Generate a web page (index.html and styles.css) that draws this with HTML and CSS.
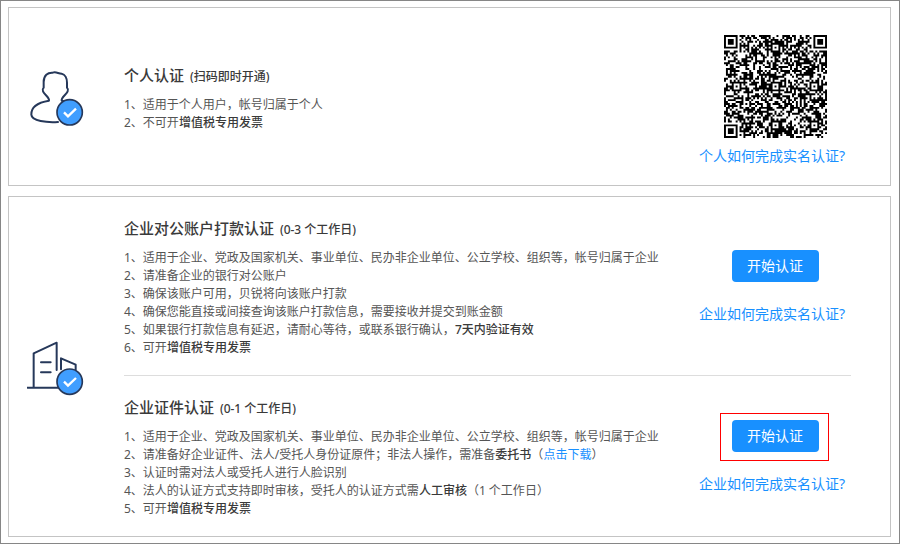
FILE: index.html
```html
<!DOCTYPE html>
<html lang="zh-CN">
<head>
<meta charset="utf-8">
<meta name="viewport" content="width=device-width, initial-scale=1">
<title>实名认证</title>
<link rel="stylesheet" href="styles.css">
</head>
<body>
<main class="page">
  <section class="card">
    <div class="card-icon">
      <svg class="icon" viewBox="20 30 174 171" aria-hidden="true">
        <path class="line" d="M113 186C80 188 34 184 33 164C32 139 55 127 86 122C88 112 72 104 68 94C65 88 70 83 70 83V66C70 46 82 37 97 38C107 34 114 41 124 41C134 43 140 55 140 68V83C140 83 145 88 142 94C138 104 122 112 124 122L138 125"/>
        <circle class="badge" cx="148" cy="157" r="38"/>
        <path class="tick" d="M131 157L143 169L167 146"/>
      </svg>
    </div>
    <div class="rows">
      <article class="row">
        <div class="info">
          <h2 class="title">个人认证 <small>(扫码即时开通)</small></h2>
          <ul class="list">
            <li>1、适用于个人用户，帐号归属于个人</li>
            <li>2、不可开<b>增值税专用发票</b></li>
          </ul>
        </div>
        <div class="action action-code">
          <svg class="qr" id="qr" viewBox="0 0 53 53" role="img" aria-label="二维码"></svg>
          <a class="help" href="#personal">个人如何完成实名认证?</a>
        </div>
      </article>
    </div>
  </section>

  <section class="card">
    <div class="card-icon">
      <svg class="icon" viewBox="20 30 174 171" aria-hidden="true">
        <path class="line" d="M22 173H118M40 173V70L109 38V120M122 118V85L166 104V120M62 97H91M62 127H91"/>
        <circle class="badge" cx="148" cy="155" r="38"/>
        <path class="tick" d="M131 155L143 167L167 144"/>
      </svg>
    </div>
    <div class="rows">
      <article class="row">
        <div class="info">
          <h2 class="title">企业对公账户打款认证 <small>(0-3 个工作日)</small></h2>
          <ul class="list">
            <li>1、适用于企业、党政及国家机关、事业单位、民办非企业单位、公立学校、组织等，帐号归属于企业</li>
            <li>2、请准备企业的银行对公账户</li>
            <li>3、确保该账户可用，贝锐将向该账户打款</li>
            <li>4、确保您能直接或间接查询该账户打款信息，需要接收并提交到账金额</li>
            <li>5、如果银行打款信息有延迟，请耐心等待，或联系银行确认，<b>7天内验证有效</b></li>
            <li>6、可开<b>增值税专用发票</b></li>
          </ul>
        </div>
        <div class="action action-start">
          <button class="btn" type="button">开始认证</button>
          <a class="help" href="#account">企业如何完成实名认证?</a>
        </div>
      </article>
      <article class="row">
        <div class="info">
          <h2 class="title">企业证件认证 <small>(0-1 个工作日)</small></h2>
          <ul class="list">
            <li>1、适用于企业、党政及国家机关、事业单位、民办非企业单位、公立学校、组织等，帐号归属于企业</li>
            <li>2、请准备好企业证件、法人/受托人身份证原件；非法人操作，需准备<b>委托书</b>（<a class="download" href="#download">点击下载</a>）</li>
            <li>3、认证时需对法人或受托人进行人脸识别</li>
            <li>4、法人的认证方式支持即时审核，受托人的认证方式需<b>人工审核</b>（1 个工作日）</li>
            <li>5、可开<b>增值税专用发票</b></li>
          </ul>
        </div>
        <div class="action action-start">
          <button class="btn btn-marked" type="button">开始认证</button>
          <a class="help" href="#certificate">企业如何完成实名认证?</a>
        </div>
      </article>
    </div>
  </section>
</main>
<script src="qr.js"></script>
</body>
</html>
```
FILE: styles.css
```css
* {
  box-sizing: border-box;
}

body {
  margin: 0;
  background: #fff;
  color: #555;
  font: 12px/18px "Noto Sans", "Noto Sans CJK SC", sans-serif;
}

.page {
  display: flex;
  flex-direction: column;
  gap: 10px;
  min-height: 100vh;
  padding: 6px 8px 6px 7px;
  border: 1px solid #868686;
}

.card {
  display: flex;
  align-items: center;
  border: 1px solid #c4c4c4;
}

.card-icon {
  flex: none;
  width: 115px;
  padding: 3px 0 0 18px;
}

.icon {
  display: block;
  width: 58px;
  height: 57px;
}

.line {
  fill: none;
  stroke: #26385a;
  stroke-width: 6;
  stroke-linecap: round;
  stroke-linejoin: round;
}

.badge {
  fill: #409eff;
  stroke: #26385a;
  stroke-width: 5;
}

.tick {
  fill: none;
  stroke: #fff;
  stroke-width: 7;
}

.rows {
  flex: 1;
  min-width: 0;
  margin-right: 39px;
}

.row {
  display: flex;
  align-items: center;
  padding: 20px 0 18px;
}

.row + .row {
  border-top: 1px solid #ddd;
}

.info {
  flex: 1;
  min-width: 0;
}

.title {
  margin: 0 0 10px;
  color: #3a3a3a;
  font-size: 15px;
  font-weight: 500;
  line-height: 22px;
}

.title small {
  margin-left: 2px;
  font-size: 12px;
  line-height: 12px;
}

.list {
  margin: 0;
  padding: 0;
  list-style: none;
}

.list b {
  color: #3a3a3a;
  font-weight: 500;
}

.action {
  display: flex;
  flex: none;
  flex-direction: column;
  align-items: center;
  width: 152px;
}

.action-code {
  gap: 7px;
  padding-top: 7px;
}

.action-start {
  gap: 21px;
}

.qr {
  display: block;
  width: 103px;
  height: 103px;
}

.help {
  align-self: flex-start;
  color: #1890ff;
  font-size: 14px;
  line-height: 22px;
  text-decoration: none;
}

.download {
  color: #1890ff;
  text-decoration: none;
}

.btn {
  position: relative;
  width: 87px;
  height: 32px;
  padding: 0;
  border: 0;
  border-radius: 4px;
  background: #1890ff;
  color: #fff;
  font: inherit;
  font-size: 14px;
}

.btn-marked::after {
  content: "";
  position: absolute;
  inset: -7px -10px -9px -12px;
  border: 1px solid #f00;
}
```
FILE: qr.js
```js
// Draws a 53-module code: finders, alignment marks, timing lines and data.
(function () {
  var size = 53;
  var seed = 20231;
  function random() {
    seed = (seed * 1103515245 + 12345) % 2147483648;
    return seed / 2147483648;
  }
  function ring(x, y, cx, cy) {
    return Math.max(Math.abs(x - cx), Math.abs(y - cy));
  }
  var finders = [[3, 3], [49, 3], [3, 49]];
  var marks = [[26, 6], [6, 26], [26, 26], [46, 26], [26, 46], [46, 46]];
  function isDark(x, y) {
    var data = random() < 0.54;
    var i, d;
    for (i = 0; i < finders.length; i++) {
      d = ring(x, y, finders[i][0], finders[i][1]);
      if (d <= 4) return d !== 2 && d !== 4;
    }
    for (i = 0; i < marks.length; i++) {
      d = ring(x, y, marks[i][0], marks[i][1]);
      if (d <= 2) return d !== 1;
    }
    if (x === 6 || y === 6) return (x + y) % 2 === 0;
    return data;
  }
  var path = "";
  for (var y = 0; y < size; y++) {
    for (var x = 0; x < size; x++) {
      if (isDark(x, y)) path += "M" + x + " " + y + "h1v1h-1z";
    }
  }
  var shape = document.createElementNS("http://www.w3.org/2000/svg", "path");
  shape.setAttribute("d", path);
  document.getElementById("qr").appendChild(shape);
})();
```
